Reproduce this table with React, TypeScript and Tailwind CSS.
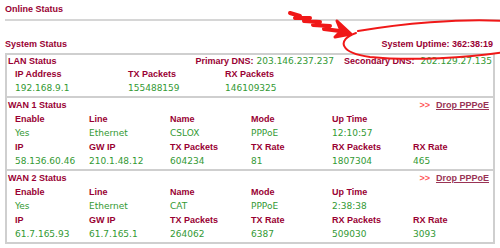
const wans = [
  {
    title: "WAN 1 Status",
    info: ["Yes", "Ethernet", "CSLOX", "PPPoE", "12:10:57", ""],
    traffic: ["58.136.60.46", "210.1.48.12", "604234", "81", "1807304", "465"],
  },
  {
    title: "WAN 2 Status",
    info: ["Yes", "Ethernet", "CAT", "PPPoE", "2:38:38", ""],
    traffic: ["61.7.165.93", "61.7.165.1", "264062", "6387", "509030", "3093"],
  },
];

const infoHead = ["Enable", "Line", "Name", "Mode", "Up Time", ""];
const trafficHead = ["IP", "GW IP", "TX Packets", "TX Rate", "RX Packets", "RX Rate"];

const label = "text-[9px] font-bold text-[#990033] whitespace-nowrap";
const value =
  "font-['DejaVu_Sans',Verdana,sans-serif] text-[9px] text-[#339933] whitespace-nowrap";

const Row = ({ cells, head }: { cells: string[]; head?: boolean }) => (
  <div className="grid grid-cols-6 h-[14px] items-center">
    {cells.map((c, i) => (
      <div key={i} className={`${head ? label : value} ${i === 0 ? "pl-[8px]" : "pl-[1px]"}`}>
        {c}
      </div>
    ))}
  </div>
);

const App = () => {
  return (
    <div className="relative w-[500px] h-[248px] overflow-hidden bg-white font-['Liberation_Sans',Arial,sans-serif]">
      {/* page title */}
      <div className={`${label} h-[19px] pl-[5px] pt-[3px] leading-[13px]`}>Online Status</div>
      <div className="ml-[5px] h-[2px] bg-[#d6d6d6]"></div>

      {/* system status */}
      <div className={`${label} mt-[17px] mx-[5px] h-[14px] flex items-center justify-between`}>
        <span>System Status</span>
        <span className="pr-[2px]">System Uptime: 362:38:19</span>
      </div>

      <div className="mx-[5px] mt-[1px] bg-[#cfcfcf] p-[2px] flex flex-col gap-[2px]">
        {/* LAN */}
        <div className="bg-white">
          <div className="h-[13px] flex items-center pl-[1px] pr-[1px]">
            <span className={`${label} flex-1`}>LAN Status</span>
            <span className={label}>Primary DNS:</span>
            <span className={`${value} ml-[3px]`}>203.146.237.237</span>
            <span className={`${label} ml-[10px]`}>Secondary DNS:</span>
            <span className={`${value} ml-[6px]`}>202.129.27.135</span>
          </div>
          <div className="grid grid-cols-[121px_97px_1fr] h-[14px] items-center">
            <span className={`${label} pl-[8px]`}>IP Address</span>
            <span className={label}>TX Packets</span>
            <span className={label}>RX Packets</span>
          </div>
          <div className="grid grid-cols-[121px_97px_1fr] h-[14px] items-center">
            <span className={`${value} pl-[8px]`}>192.168.9.1</span>
            <span className={value}>155488159</span>
            <span className={value}>146109325</span>
          </div>
        </div>

        {/* WANs */}
        {wans.map((w) => (
          <div key={w.title} className="bg-white">
            <div className="h-[15px] flex items-center pl-[1px] pr-[4px]">
              <span className={`${label} flex-1`}>{w.title}</span>
              <span className="text-[9px] font-bold text-[#ff5a5a] mr-[6px]">&gt;&gt;</span>
              <span className={`${label} underline text-[#993355]`}>Drop PPPoE</span>
            </div>
            <Row cells={infoHead} head />
            <Row cells={w.info} />
            <Row cells={trafficHead} head />
            <Row cells={w.traffic} />
          </div>
        ))}
      </div>

      {/* red hand-drawn annotation */}
      <svg className="absolute inset-0 pointer-events-none" width="500" height="248" viewBox="0 0 500 248">
        <path
          d="M290 13 L300 16 L295 18 L310 18 L304 21 L320 22 L313 25 L330 26 L324 29 L340 31"
          fill="none"
          stroke="#f01818"
          strokeWidth="4"
          strokeLinecap="round"
          strokeLinejoin="round"
        />
        <path d="M337 21 L351 34 L335 37 L341 31 Z" fill="#f01818" stroke="#f01818" strokeWidth="3" strokeLinejoin="round" />
        <path
          d="M358 31 C 400 24, 460 18, 505 21 M505 52 C 470 58, 410 61, 370 57 C 340 53, 336 40, 356 33"
          fill="none"
          stroke="#f01818"
          strokeWidth="2"
          strokeLinecap="round"
        />
      </svg>
    </div>
  );
};

export default App;
